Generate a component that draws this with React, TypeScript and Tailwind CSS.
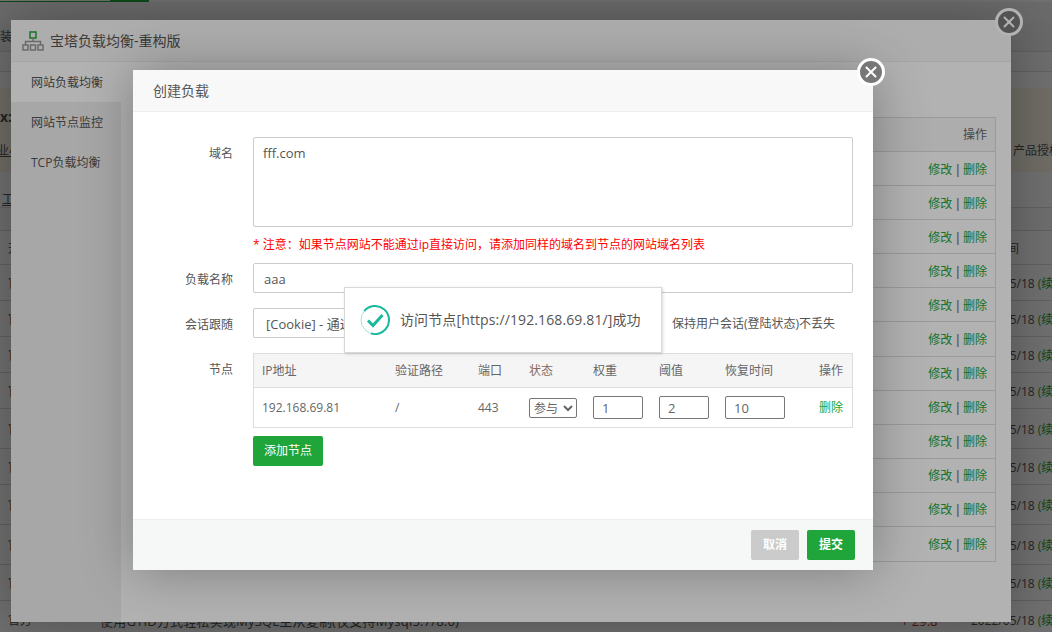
import { X } from "lucide-react";

const font = "[font-family:'Open_Sans','Noto_Sans_CJK_SC',sans-serif]";

const pageRows = [
  { h: "h-[34px]", left: "开", date: "到期时间" },
  { h: "h-[36px]", left: "官方", date: "2022/05/18 " },
  { h: "h-[36px]", left: "官方", date: "2022/05/18 " },
  { h: "h-[36px]", left: "官方", date: "2022/05/18 " },
  { h: "h-[36px]", left: "官方", date: "2022/05/18 " },
  { h: "h-[40px]", left: "官方", date: "2022/05/18 " },
  { h: "h-[36px]", left: "官方", date: "2022/05/18 " },
  { h: "h-[40px]", left: "官方", date: "2022/05/18 " },
  { h: "h-[40px]", left: "官方", date: "2022/05/18 " },
  { h: "h-[36px]", left: "官方", date: "2022/05/18 " },
];

const balanceRows = Array.from({ length: 12 }, (_, i) => i);

// 后面的软件列表页,只在弹窗两侧露出一点
const BackgroundPage = () => (
  <div className="flex flex-col text-[14px] text-[#555]">
    <div className="flex h-[2px]">
      <div className="h-full w-[110px] border-b border-[#20a53a] bg-white" />
      <div className="h-full w-[39px] bg-[#20a53a]" />
    </div>
    <div className="h-[20px] bg-[#f3f3f3]" />
    <div className="flex h-[30px] items-center overflow-hidden whitespace-nowrap border-b border-[#ddd] bg-[#f0f0f0] pl-[0px]">
      <span className="text-[12px]">装</span>
    </div>
    <div className="h-[20px] border-b border-[#ddd] bg-[#fafafa]" />
    <div className="h-[16px] bg-white" />
    <div className="flex h-[84px] justify-between overflow-hidden whitespace-nowrap bg-[#fdf8e8] pt-[19px]">
      <div className="flex flex-col gap-[14px]">
        <span className="h-[20px] font-bold leading-[20px]">x:</span>
        <span className="ml-[-3px] h-[20px] text-[12px] leading-[20px] underline">业小</span>
      </div>
      <div className="w-[39px] self-end pb-[11px] text-[12px] leading-[20px]">产品授权</div>
    </div>
    <div className="h-[36px] border-b border-[#ddd] bg-white pt-[18px] pl-[2px] text-[12px] leading-[20px] underline">
      工
    </div>
    <div className="h-[23px] border-b border-[#ddd] bg-[#fafafa]" />
    {pageRows.map((row, i) => (
      <div
        key={i}
        className={`flex ${row.h} items-center whitespace-nowrap border-b border-[#ddd] bg-white pl-[8px] text-[12px]`}
      >
        <span className="w-[963px] shrink-0 pt-[2px]">{row.left}</span>
        <span className="shrink-0 pt-[2px]">
          {row.date}
          {row.date.startsWith("2022") && <span className="text-[#20a53a]">(续费)</span>}
        </span>
      </div>
    ))}
    <div className="flex h-[40px] items-start whitespace-nowrap bg-white pl-[8px] pt-[11px] text-[13px]">
      <span className="w-[92px] shrink-0 text-[12px]">官方</span>
      <span className="w-[801px] shrink-0 tracking-[0.2px]">使用GTID方式轻松实现MySQL主从复制(仅支持Mysql5.7/8.0)</span>
      <span className="w-[70px] shrink-0 text-[#c0392b]">+ 29.8</span>
      <span className="shrink-0 text-[12px]">
        2022/05/18 <span className="text-[#20a53a]">(续费)</span>
      </span>
    </div>
  </div>
);

const CloseButton = () => (
  <button className="absolute top-[-12px] right-[-12px] flex size-[28px] items-center justify-center rounded-full border-[3px] border-white bg-[#777] text-white">
    <X size={18} strokeWidth={2.6} />
  </button>
);

const BalanceWindow = () => (
  <div className="absolute top-[20px] left-[11px] flex h-[602px] w-[1000px] flex-col bg-white shadow-[1px_1px_50px_rgba(0,0,0,0.3)]">
    <CloseButton />
    <div className="flex h-[42px] items-center gap-[6px] border-b border-[#eee] bg-[#f8f8f8] pl-[11px] text-[14px] text-[#555]">
      <svg width="22" height="20" viewBox="0 0 22 20" fill="none" strokeWidth="1.5">
        <rect x="8" y="1" width="6" height="6" stroke="#20a53a" />
        <path d="M11 7v3.5M3.5 14v-3.5h15V14" stroke="#999" />
        <rect x="1" y="14" width="5" height="5" stroke="#999" />
        <rect x="8.5" y="14" width="5" height="5" stroke="#999" />
        <rect x="16" y="14" width="5" height="5" stroke="#999" />
      </svg>
      宝塔负载均衡-重构版
    </div>
    <div className="flex flex-1">
      <div className="w-[110px] bg-[#f0f0f0] text-[12px] text-[#555]">
        <div className="flex h-[40px] items-center bg-white pt-[2px] pl-[20px]">网站负载均衡</div>
        <div className="flex h-[40px] items-center pt-[2px] pl-[20px]">网站节点监控</div>
        <div className="flex h-[40px] items-center pt-[2px] pl-[20px]">TCP负载均衡</div>
      </div>
      <div className="flex-1 pt-[55px] pr-[15px] pl-[20px]">
        <div className="border border-[#ddd] text-[12px] text-[#666]">
          <div className="flex h-[34px] items-center justify-between border-b border-[#ddd] bg-[#f8f8f8] pt-[1px] pr-[8px] pl-[714px]">
            <span className="w-[20px] overflow-hidden">状态</span>
            <span>操作</span>
          </div>
          {balanceRows.map((i) => (
            <div
              key={i}
              className="flex h-[34.1px] items-center justify-between border-b border-[#ddd] pt-[2px] pr-[8px] pl-[714px] last:border-b-0"
            >
              <span className="w-[20px] overflow-hidden text-[#666]">正常</span>
              <span className="flex items-center text-[#20a53a]">
                修改
                <span className="mx-[2px] font-bold text-[#888]">|</span>
                删除
              </span>
            </div>
          ))}
        </div>
      </div>
    </div>
  </div>
);

const Field = ({ label, children }: { label: string; children: React.ReactNode }) => (
  <div className="flex gap-[20px]">
    <div className="w-[100px] pt-[7px] text-right text-[12px] leading-[20px] text-[#555]">{label}</div>
    <div className="w-[600px]">{children}</div>
  </div>
);

const NodeInput = ({ value, width }: { value: string; width: string }) => (
  <input
    readOnly
    defaultValue={value}
    className={`h-[23px] ${width} rounded-[2px] border border-[#767676] bg-white px-[8px] text-[13px] text-[#666]`}
  />
);

const nodeCols = "grid grid-cols-[133px_83px_51px_64px_66px_66px_94px_34px] pl-[8px]";

const CreateWindow = () => (
  <div className="absolute top-[70px] left-[133px] flex h-[500px] w-[740px] flex-col bg-white shadow-[1px_1px_50px_rgba(0,0,0,0.3)]">
    <CloseButton />
    <div className="flex h-[42px] items-center border-b border-[#eee] bg-[#f8f8f8] pl-[20px] text-[14px] text-[#555]">
      创建负载
    </div>
    <div className="flex flex-1 flex-col pt-[25px]">
      <Field label="域名">
        <textarea
          readOnly
          defaultValue="fff.com"
          className="block h-[90px] w-full resize-none rounded-[2px] border border-[#ccc] px-[9px] py-[6px] text-[13px] text-[#555]"
        />
        <div className="mt-[7px] h-[20px] pt-[1px] text-[12px] leading-[20px] text-[#f00]">
          {"* 注意\uFF1A如果节点网站不能通过ip直接访问\uFF0C请添加同样的域名到节点的网站域名列表"}
        </div>
      </Field>
      <div className="mt-[9px]">
        <Field label="负载名称">
          <input
            readOnly
            defaultValue="aaa"
            className="h-[30px] w-full rounded-[2px] border border-[#ccc] px-[10px] pt-[1px] text-[13px] text-[#555]"
          />
        </Field>
      </div>
      <div className="mt-[15px]">
        <Field label="会话跟随">
          <div className="flex items-center">
            <select className="h-[30px] w-[400px] rounded-[2px] border border-[#ccc] pt-[1px] pl-[8px] text-[13px] text-[#555]">
              <option>[Cookie] - 通过Cookie方式跟随</option>
            </select>
            <span className="ml-[19px] pt-[1px] text-[12px] text-[#555]">保持用户会话(登陆状态)不丢失</span>
          </div>
        </Field>
      </div>
      <div className="mt-[15px]">
        <Field label="节点">
          <div className="border border-[#ddd] text-[12px] text-[#666]">
            <div className={`${nodeCols} h-[34px] items-center border-b border-[#ddd] bg-[#f5f5f5] pt-[1px]`}>
              <span>IP地址</span>
              <span>验证路径</span>
              <span>端口</span>
              <span className="text-[#86695c]">状态</span>
              <span>权重</span>
              <span>阈值</span>
              <span>恢复时间</span>
              <span>操作</span>
            </div>
            <div className={`${nodeCols} h-[39px] items-center`}>
              <span>192.168.69.81</span>
              <span>/</span>
              <span>443</span>
              <select className="h-[20px] w-[48px] rounded-[2px] border border-[#767676] bg-white text-[12px]">
                <option>参与</option>
              </select>
              <NodeInput value="1" width="w-[50px]" />
              <NodeInput value="2" width="w-[50px]" />
              <NodeInput value="10" width="w-[60px]" />
              <span className="text-[#20a53a]">删除</span>
            </div>
          </div>
          <button className="mt-[8px] h-[30px] w-[70px] rounded-[2px] bg-[#20a53a] text-[12px] text-white">
            添加节点
          </button>
        </Field>
      </div>
    </div>
    <div className="flex h-[51px] items-center justify-end gap-[8px] border-t border-[#eee] bg-[#f6f8f8] pr-[18px]">
      <button className="h-[30px] w-[48px] rounded-[2px] bg-[#cbcbcb] text-[12px] font-bold text-white">取消</button>
      <button className="h-[30px] w-[48px] rounded-[2px] bg-[#20a53a] text-[12px] font-bold text-white">提交</button>
    </div>
  </div>
);

const Toast = () => (
  <div className="absolute top-[287px] left-[344px] flex h-[66px] w-[318px] items-center gap-[10px] border border-[#d9d9d9] bg-white pl-[15px] text-[14px] tracking-[0.12px] text-[#555] shadow-[1px_1px_3px_rgba(0,0,0,0.15)]">
    <svg width="30" height="30" viewBox="0 0 30 30" fill="none">
      <circle cx="15" cy="15" r="14" stroke="#a5e3d6" strokeWidth="1" />
      <circle cx="15" cy="15" r="14" stroke="#1ab99b" strokeWidth="2" strokeDasharray="60 28" transform="rotate(-140 15 15)" />
      <path d="M8 15.5l5 5L22.5 10" stroke="#1ab99b" strokeWidth="3" />
    </svg>
    <span className="pb-[2px]">访问节点[https://192.168.69.81/]成功</span>
  </div>
);

export default function App() {
  return (
    <div className={`relative h-[632px] w-[1052px] overflow-hidden bg-white ${font}`}>
      <BackgroundPage />
      <div className="absolute inset-0 bg-black/[0.37]" />
      <BalanceWindow />
      <div className="absolute inset-0 bg-black/30" />
      <CreateWindow />
      <Toast />
    </div>
  );
}
